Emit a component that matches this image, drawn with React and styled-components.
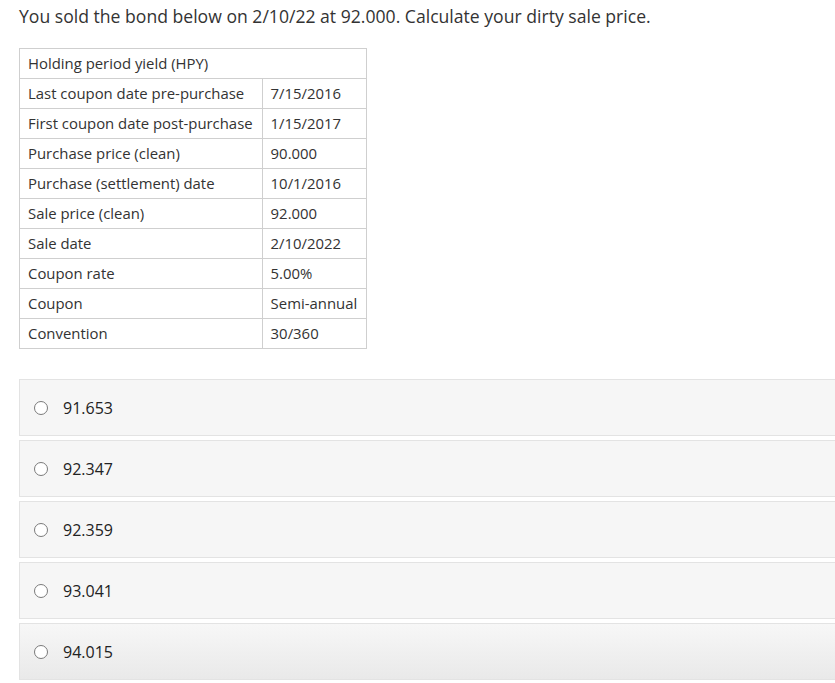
import React from 'react';
import styled, { createGlobalStyle } from 'styled-components';

const GlobalStyle = createGlobalStyle`
  html, body {
    margin: 0;
    padding: 0;
    background: #fff;
    overflow: hidden;
  }
  body {
    font-family: 'Open Sans', 'Liberation Sans', sans-serif;
    color: #333;
  }
`;

const Page = styled.div`
  padding: 3px 0 0 19px;
  width: 835px;
  box-sizing: border-box;
`;

const Question = styled.p`
  margin: 0;
  font-size: 17.6px;
  line-height: 26px;
  color: #333;
`;

const DataTable = styled.table`
  margin-top: 19px;
  border-collapse: collapse;
  font-size: 14.9px;
  color: #333;

  td {
    border: 1px solid #cfcfcf;
    height: 30px;
    padding: 0 9px 1px 8px;
    box-sizing: border-box;
    white-space: nowrap;
    line-height: 20px;
  }
`;

const Options = styled.div`
  margin-top: 30px;
  margin-right: -20px;
  display: flex;
  flex-direction: column;
  gap: 4px;
`;

const Option = styled.label`
  display: flex;
  align-items: center;
  height: 57px;
  box-sizing: border-box;
  padding-left: 14px;
  border: 1px solid #e3e3e3;
  background: ${p => (p.$hover ? 'linear-gradient(#f7f7f7, #e9e9e9)' : '#f6f6f6')};
  font-size: 16px;
  color: #222;
  cursor: pointer;
`;

const Radio = styled.span`
  width: 12px;
  height: 12px;
  border: 1px solid #7a7a7a;
  border-radius: 50%;
  background: #fff;
  margin-right: 15px;
  flex-shrink: 0;
`;

const rows = [
  ['Last coupon date pre-purchase', '7/15/2016'],
  ['First coupon date post-purchase', '1/15/2017'],
  ['Purchase price (clean)', '90.000'],
  ['Purchase (settlement) date', '10/1/2016'],
  ['Sale price (clean)', '92.000'],
  ['Sale date', '2/10/2022'],
  ['Coupon rate', '5.00%'],
  ['Coupon', 'Semi-annual'],
  ['Convention', '30/360'],
];

const answers = ['91.653', '92.347', '92.359', '93.041', '94.015'];

export default function App() {
  return (
    <Page>
      <GlobalStyle />
      <Question>
        You sold the bond below on 2/10/22 at 92.000. Calculate your dirty sale price.
      </Question>
      <DataTable>
        <tbody>
          <tr>
            <td colSpan={2}>Holding period yield (HPY)</td>
          </tr>
          {rows.map(([label, value]) => (
            <tr key={label}>
              <td>{label}</td>
              <td>{value}</td>
            </tr>
          ))}
        </tbody>
      </DataTable>
      <Options>
        {answers.map((a, i) => (
          <Option key={a} $hover={i === answers.length - 1}>
            <Radio />
            {a}
          </Option>
        ))}
      </Options>
    </Page>
  );
}
